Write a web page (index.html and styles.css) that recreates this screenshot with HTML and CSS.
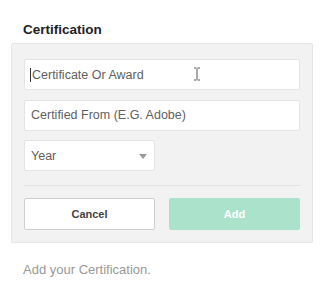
FILE: index.html
```html
<!DOCTYPE html>
<html>
<head>
<meta charset="utf-8">
<link rel="stylesheet" href="styles.css">
</head>
<body>
<div class="page">
  <h2 class="title">Certification</h2>
  <div class="panel">
    <div class="field field-active">
      <span class="caret"></span><span class="ph">Certificate Or Award</span>
      <svg class="ibeam" width="8" height="14" viewBox="0 0 8 14"><path d="M1 1h2.5M4.5 1H7M4 1.5v11M1 13h2.5M4.5 13H7" stroke="#555" stroke-width="1" fill="none"/></svg>
    </div>
    <div class="field"><span class="ph">Certified From (E.G. Adobe)</span></div>
    <div class="field select"><span class="ph">Year</span><span class="arrow"></span></div>
    <div class="sep"></div>
    <div class="buttons">
      <button class="btn cancel">Cancel</button>
      <button class="btn add">Add</button>
    </div>
  </div>
  <p class="hint">Add your Certification.</p>
</div>
</body>
</html>
```
FILE: styles.css
```css
* { box-sizing: border-box; }
html, body { margin: 0; padding: 0; background: #fff; }
body { font-family: "Liberation Sans", Arial, sans-serif; }
.page { width: 321px; height: 284px; padding: 22px 0 0 11px; }
.title {
  margin: 0 0 6px 12px;
  font-size: 13.5px;
  font-weight: bold;
  color: #222;
  line-height: 15px;
}
.panel {
  width: 302px;
  height: 200px;
  background: #f2f2f2;
  border: 1px solid #e6e6e6;
  border-radius: 2px;
  padding: 15px 12px 12px 12px;
  display: flex;
  flex-direction: column;
}
.field {
  position: relative;
  height: 31px;
  flex: none;
  background: #fff;
  border: 1px solid #e4e4e4;
  border-radius: 2px;
  display: flex;
  align-items: center;
  padding-left: 6px;
  margin-bottom: 9.5px;
  font-size: 12.5px;
  color: #5f5f5f;
}
.field-active { padding-left: 5px; }
.caret { width: 1px; height: 14px; background: #333; margin-right: 1px; }
.ibeam { position: absolute; left: 168px; top: 7px; }
.select { width: 131px; justify-content: space-between; padding-right: 7px; margin-bottom: 0; }
.arrow {
  width: 0; height: 0;
  margin-top: 2px;
  border-left: 4.5px solid transparent;
  border-right: 4.5px solid transparent;
  border-top: 5px solid #9a9a9a;
}
.sep { height: 1px; flex: none; background: #e2e2e2; margin: 14px 0 12px 0; }
.buttons { display: flex; gap: 14px; }
.btn {
  width: 131px;
  height: 32px;
  border-radius: 2px;
  font-family: "Liberation Sans", Arial, sans-serif;
  font-size: 11px;
  font-weight: bold;
  padding: 0;
}
.cancel { background: #fff; border: 1px solid #cfcfcf; color: #444; }
.add { background: #abe2cb; border: 1px solid #abe2cb; color: #fff; }
.hint { margin: 19px 0 0 12px; font-size: 13px; line-height: 15px; color: #999; }
```
